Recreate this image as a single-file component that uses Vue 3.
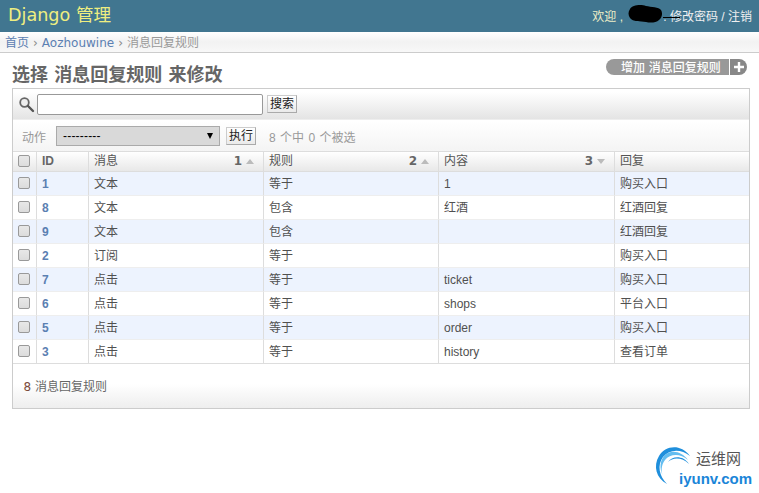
<script setup>
const rows = [
  { id: 1, msg: '文本', rule: '等于', content: '1', reply: '购买入口' },
  { id: 8, msg: '文本', rule: '包含', content: '红酒', reply: '红酒回复' },
  { id: 9, msg: '文本', rule: '包含', content: '', reply: '红酒回复' },
  { id: 2, msg: '订阅', rule: '等于', content: '', reply: '购买入口' },
  { id: 7, msg: '点击', rule: '等于', content: 'ticket', reply: '购买入口' },
  { id: 6, msg: '点击', rule: '等于', content: 'shops', reply: '平台入口' },
  { id: 5, msg: '点击', rule: '等于', content: 'order', reply: '购买入口' },
  { id: 3, msg: '点击', rule: '等于', content: 'history', reply: '查看订单' }
]
</script>

<template>
  <div class="page">
    <header class="top">
      <div class="brand">Django 管理</div>
      <div class="tools">
        <span class="welcome">欢迎 ,</span>
        <svg class="blob" width="35" height="18" viewBox="0 0 35 18">
          <path d="M2 4C4 0 13-1 18 1c5 1 13 1 15 4 2 3 1 8-2 10-3 3-9 3-13 2C12 16 5 17 2 13 0 10 0 7 2 4z" fill="#000"/>
        </svg>
        <span class="links">.&nbsp;修改密码 / 注销</span>
        <span class="strike"></span>
      </div>
    </header>
    <nav class="crumbs">
      <a>首页</a><i>›</i><a>Aozhouwine</a><i>›</i><span>消息回复规则</span>
    </nav>
    <main class="content">
      <div class="title-row">
        <h1>选择 消息回复规则 来修改</h1>
        <div class="add">
          <span class="add-label">增加 消息回复规则</span>
          <span class="add-icon">
            <svg width="14" height="14" viewBox="0 0 14 14"><path d="M7 2v10M2 7h10" stroke="#fff" stroke-width="2.4" fill="none"/></svg>
          </span>
        </div>
      </div>
      <section class="module">
        <div class="search">
          <svg width="17" height="17" viewBox="0 0 17 17" class="lens">
            <circle cx="6.5" cy="6.5" r="4.3" fill="#eee" stroke="#666" stroke-width="1.8"/>
            <path d="M10 10l5 5" stroke="#555" stroke-width="2.4" stroke-linecap="round"/>
          </svg>
          <div class="search-input"></div>
          <div class="btn">搜索</div>
        </div>
        <div class="actions">
          <span class="lbl">动作</span>
          <div class="select"><span>---------</span><b></b></div>
          <div class="btn">执行</div>
          <span class="count"><em>8</em> 个中 <em>0</em> 个被选</span>
        </div>
        <table>
          <colgroup>
            <col class="c0" /><col class="c1" /><col class="c2" /><col class="c3" /><col class="c4" /><col class="c5" />
          </colgroup>
          <thead>
            <tr>
              <th class="chk"><span class="box"></span></th>
              <th class="idh">ID</th>
              <th><div class="th-in">消息<span class="sort"><b>1</b><i class="up"></i></span></div></th>
              <th><div class="th-in">规则<span class="sort"><b>2</b><i class="up"></i></span></div></th>
              <th><div class="th-in">内容<span class="sort"><b>3</b><i class="down"></i></span></div></th>
              <th>回复</th>
            </tr>
          </thead>
          <tbody>
            <tr v-for="r in rows" :key="r.id">
              <td class="chk"><span class="box"></span></td>
              <td class="id">{{ r.id }}</td>
              <td>{{ r.msg }}</td>
              <td>{{ r.rule }}</td>
              <td>{{ r.content }}</td>
              <td>{{ r.reply }}</td>
            </tr>
          </tbody>
        </table>
        <div class="paginator"><em>8</em> 消息回复规则</div>
      </section>
    </main>
    <div class="mark">
      <svg width="50" height="50" viewBox="0 0 50 50" class="mark-logo">
        <path d="M17 42C6 36 3 24 9 14 15 4 30 1 40 14 31 7 20 7 13 15 7 23 9 34 17 42z" fill="#1f8fdc"/>
        <path d="M38 18C30 11 20 12 15 18 11 23 11 30 13 34 9 26 10 18 15 13 22 7 32 10 38 18z" fill="#63bdf0"/>
        <path d="M39 22C32 15 23 15 18 20 22 14 33 13 39 22z" fill="#1f8fdc"/>
      </svg>
      <span class="mark-cn">运维网</span>
      <span class="mark-en">iyunv.com</span>
    </div>
  </div>
</template>

<style>
html, body { margin: 0; background: #fff; }
</style>

<style scoped>
.page {
  position: relative;
  width: 759px;
  height: 493px;
  overflow: hidden;
  background: #fff;
  font-family: "Liberation Sans", "Noto Sans CJK SC", sans-serif;
  font-size: 12px;
  color: #333;
}
.top {
  height: 32px;
  background: #417690;
  display: flex;
  justify-content: space-between;
  align-items: center;
  padding: 0 7px 0 8px;
}
.brand {
  font-family: "DejaVu Sans", "Noto Sans CJK SC", sans-serif;
  font-size: 17.6px;
  color: #eeee80;
  line-height: 28px;
  margin-top: -3px;
}
.tools {
  position: relative;
  display: flex;
  align-items: center;
  font-size: 12px;
  color: #eeeec8;
  margin-top: -1px;
}
.welcome { width: 36px; white-space: nowrap; }
.blob { flex: none; margin-bottom: 3px; }
.links { color: #f0f0f0; white-space: nowrap; }
.strike {
  position: absolute;
  left: 71px;
  top: 12px;
  width: 17px;
  height: 1px;
  background: #000;
}
.crumbs {
  box-sizing: border-box;
  height: 21px;
  padding: 4px 5px 0;
  border-bottom: 1px solid #ccc;
  background: linear-gradient(#fff, #f2f2f2 50%, #f8f8f8);
  color: #999;
  font-family: "DejaVu Sans", "Noto Sans CJK SC", sans-serif;
  font-size: 12px;
  line-height: 15px;
  white-space: nowrap;
}
.crumbs a { color: #5b80b2; }
.crumbs i { font-style: normal; margin: 0 4px; color: #888; }
.content { padding: 0 9px 0 12px; }
.title-row {
  display: flex;
  justify-content: space-between;
  align-items: flex-start;
  height: 35px;
}
h1 {
  margin: 10px 0 0;
  font-family: "DejaVu Sans", "Noto Sans CJK SC", sans-serif;
  font-size: 18px;
  line-height: 24px;
  font-weight: 700;
  color: #666;
}
.add { display: flex; margin: 6px 3px 0 0; height: 16px; }
.add-label {
  width: 123px;
  box-sizing: border-box;
  padding-left: 15px;
  background: #999;
  color: #fff;
  font-family: "DejaVu Sans", "Noto Sans CJK SC", sans-serif;
  font-size: 12px;
  font-weight: 500;
  line-height: 18px;
  border-radius: 8px 0 0 8px;
  white-space: nowrap;
}
.add-icon {
  width: 17px;
  margin-left: 1px;
  background: #888;
  border-radius: 0 8px 8px 0;
  display: flex;
  align-items: center;
  justify-content: center;
}
.module {
  box-sizing: border-box;
  width: 738px;
  height: 321px;
  border: 1px solid #ccc;
  background: linear-gradient(#fff 295px, #eee);
}
.search {
  box-sizing: border-box;
  height: 31px;
  display: flex;
  align-items: center;
  padding: 0 0 0 5px;
  background: linear-gradient(#fff 10%, #e4e4e4);
  border-bottom: 1px solid #eee;
}
.lens { flex: none; margin-right: 2px; }
.search-input {
  box-sizing: border-box;
  width: 226px;
  height: 21px;
  border: 1.5px solid #999;
  border-radius: 2px;
  background: #fff;
  margin-right: 4px;
}
.btn {
  box-sizing: border-box;
  height: 18px;
  padding: 0 2px;
  font-size: 12px;
  line-height: 16px;
  color: #222;
  background: linear-gradient(#fff, #eaeaea);
  border: 1px solid #ccc;
  border-bottom-color: #aaa;
  border-right-color: #aaa;
}
.actions {
  box-sizing: border-box;
  height: 32px;
  display: flex;
  align-items: center;
  padding-left: 9px;
  background: linear-gradient(#fff, #f4f4f4);
  border-top: 1px solid #fff;
  border-bottom: 1px solid #ddd;
}
.lbl { color: #999; width: 34px; }
.select {
  box-sizing: border-box;
  width: 164px;
  height: 20px;
  background: #d9d9d9;
  border: 1px solid #aaa;
  margin-right: 6px;
  display: flex;
  align-items: center;
  justify-content: space-between;
  padding: 0 6px 0 6px;
  color: #000;
  letter-spacing: 0.2px;
}
.select b {
  width: 0; height: 0;
  border: 3px solid transparent;
  border-top: 6px solid #000;
  border-bottom: 0;
}
.count { color: #999; margin-left: 13px; word-spacing: 1px; }
em { font-style: normal; }
.count em { color: #999; }
table {
  border-collapse: separate;
  border-spacing: 0;
  table-layout: fixed;
  width: 736px;
}
.c0 { width: 23px; }
.c1 { width: 52px; }
.c2 { width: 175px; }
.c3 { width: 175px; }
.c4 { width: 176px; }
.c5 { width: 135px; }
th {
  height: 20px;
  padding: 0 5px 1px;
  box-sizing: border-box;
  text-align: left;
  font-weight: 400;
  color: #555;
  font-size: 12px;
  line-height: 14px;
  background: linear-gradient(#fff, #e8e8e8);
  border-left: 1px solid #ddd;
  border-bottom: 1px solid #ddd;
}
th:first-child, td:first-child { border-left: 0; }
.idh { font-weight: 700; color: #666; }
.th-in { display: flex; justify-content: space-between; align-items: center; }
.sort { display: flex; align-items: center; gap: 4px; margin-right: 4px; }
.sort b { color: #666; font-family: "DejaVu Sans", sans-serif; font-size: 12px; }
.up, .down { width: 0; height: 0; border: 4.5px solid transparent; }
.up { border-top: 0; border-bottom: 5px solid #bbb; }
.down { border-bottom: 0; border-top: 5px solid #bbb; }
td {
  box-sizing: border-box;
  height: 24px;
  padding: 0 5px;
  color: #505050;
  font-size: 12px;
  line-height: 14px;
  border-left: 1px solid #ddd;
  border-bottom: 1px solid #eee;
}
tbody tr:nth-child(odd) td { background: #edf3fe; }
tbody tr:nth-child(even) td { background: #fff; }
td.chk, th.chk { padding: 0 0 1px 5px; }
.box {
  display: block;
  box-sizing: border-box;
  width: 12px;
  height: 12px;
  border: 1px solid #999;
  border-radius: 2px;
  background: linear-gradient(#e8e8e8, #dcdcdc);
}
td.id { color: #5b80b2; font-weight: 700; }
.paginator {
  padding: 15px 0 0 10.5px;
  color: #666;
  font-family: "DejaVu Sans", "Noto Sans CJK SC", sans-serif;
  font-size: 12px;
  line-height: 16px;
  border-top: 1px solid #ddd;
  margin-top: -1px;
}
.paginator em { color: #7a4a3a; }
.mark {
  position: absolute;
  left: 650px;
  top: 442px;
  width: 109px;
  height: 51px;
}
.mark-logo { position: absolute; left: 0; top: 0; }
.mark-cn {
  position: absolute;
  left: 46px;
  top: 7px;
  font-size: 15px;
  line-height: 20px;
  color: #555;
}
.mark-en {
  position: absolute;
  left: 29px;
  top: 28px;
  font-size: 15px;
  line-height: 18px;
  font-weight: 700;
  color: #1a85d8;
  white-space: nowrap;
}
</style>
